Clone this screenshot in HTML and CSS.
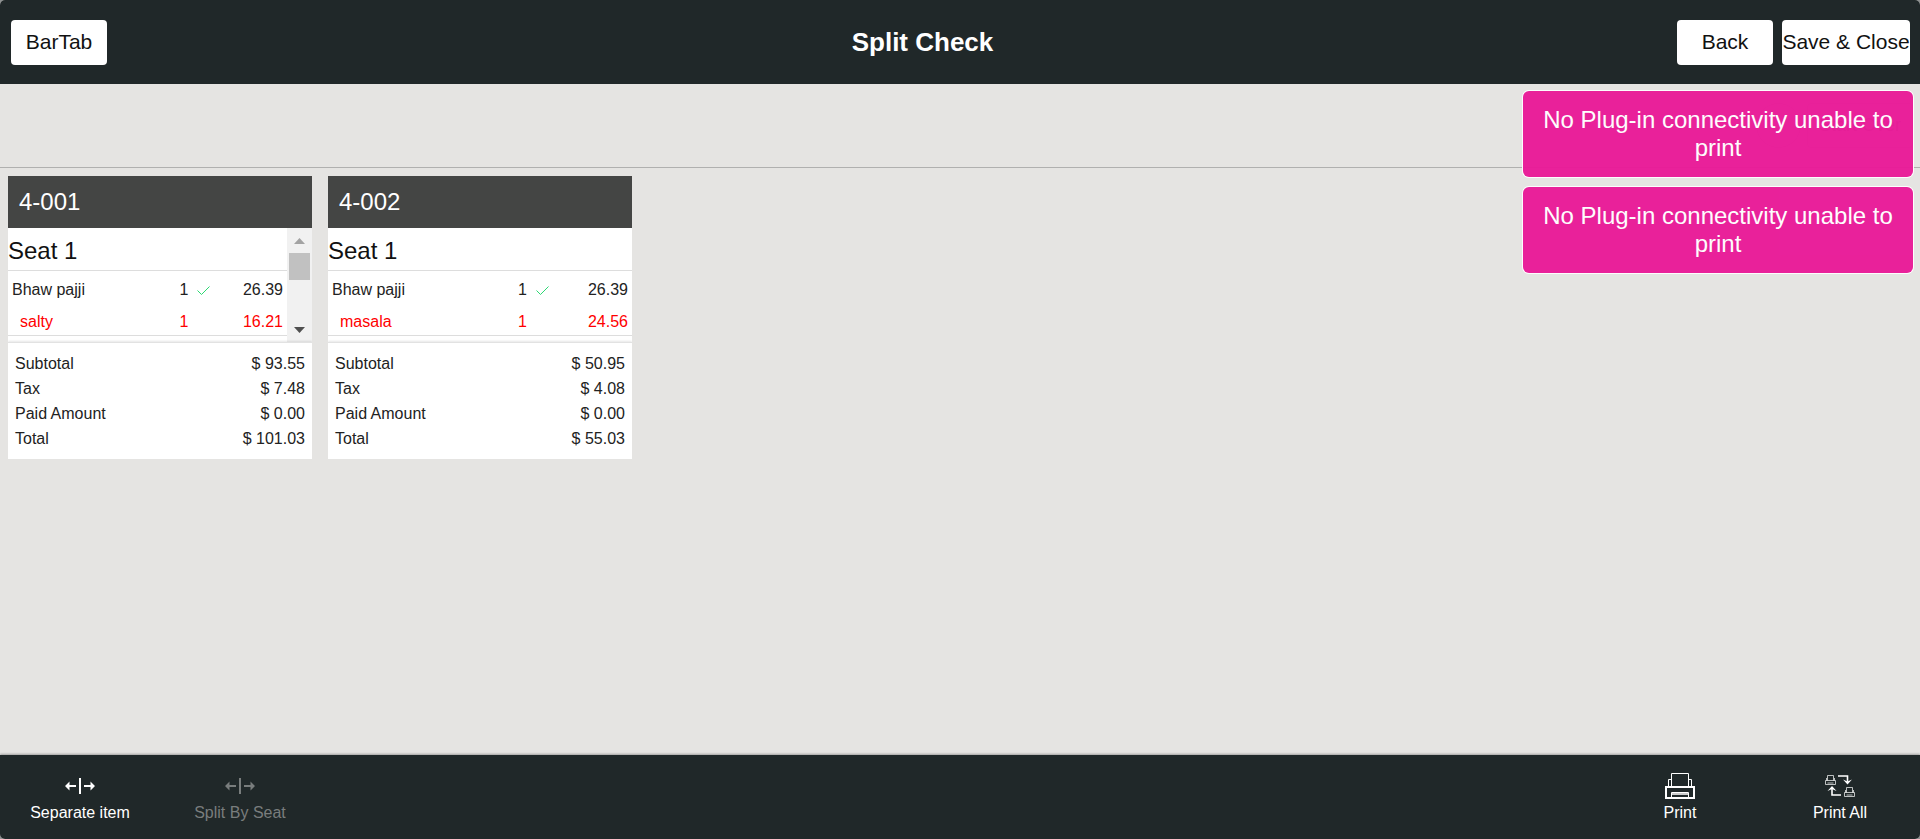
FILE: index.html
```html
<!DOCTYPE html>
<html lang="en">
<head>
<meta charset="utf-8">
<title>Split Check</title>
<link rel="stylesheet" href="styles.css">
</head>
<body>
<div class="app">
  <header class="topbar">
    <div class="topbar-left"><button class="btn" type="button">BarTab</button></div>
    <h1 class="title">Split Check</h1>
    <div class="topbar-right">
      <button class="btn" type="button">Back</button>
      <button class="btn btn-wide" type="button">Save &amp; Close</button>
    </div>
  </header>

  <div class="toolbar">
    <button class="round" type="button" aria-label="Add"></button>
    <button class="start-over" type="button">Start Over</button>
  </div>

  <main class="checks">
    <section class="card">
      <h2 class="card-title">4-001</h2>
      <div class="card-body">
        <div class="items">
          <h3 class="seat">Seat 1</h3>
          <table class="lines">
            <tr><td class="name">Bhaw pajji</td><td class="qty">1</td><td class="tick"><svg width="13" height="12" viewBox="0 0 13 12"><path d="M0.500 6.500 L4.500 10.500 L12.500 2.500"/></svg></td><td class="price">26.39</td></tr>
            <tr class="mod"><td class="name">salty</td><td class="qty">1</td><td class="tick"></td><td class="price">16.21</td></tr>
          </table>
        </div>
        <div class="scroll" aria-hidden="true">
          <svg class="up" width="11" height="6" viewBox="0 0 11 6"><path d="M5.500 0 L11 6 H0Z"/></svg>
          <div class="thumb"></div>
          <svg class="down" width="11" height="6" viewBox="0 0 11 6"><path d="M0 0 H11 L5.500 6Z"/></svg>
        </div>
      </div>
      <dl class="totals">
        <div><dt>Subtotal</dt><dd>$ 93.55</dd></div>
        <div><dt>Tax</dt><dd>$ 7.48</dd></div>
        <div><dt>Paid Amount</dt><dd>$ 0.00</dd></div>
        <div><dt>Total</dt><dd>$ 101.03</dd></div>
      </dl>
    </section>

    <section class="card">
      <h2 class="card-title">4-002</h2>
      <div class="card-body">
        <div class="items">
          <h3 class="seat">Seat 1</h3>
          <table class="lines">
            <tr><td class="name">Bhaw pajji</td><td class="qty">1</td><td class="tick"><svg width="13" height="12" viewBox="0 0 13 12"><path d="M0.500 6.500 L4.500 10.500 L12.500 2.500"/></svg></td><td class="price">26.39</td></tr>
            <tr class="mod"><td class="name">masala</td><td class="qty">1</td><td class="tick"></td><td class="price">24.56</td></tr>
          </table>
        </div>
      </div>
      <dl class="totals">
        <div><dt>Subtotal</dt><dd>$ 50.95</dd></div>
        <div><dt>Tax</dt><dd>$ 4.08</dd></div>
        <div><dt>Paid Amount</dt><dd>$ 0.00</dd></div>
        <div><dt>Total</dt><dd>$ 55.03</dd></div>
      </dl>
    </section>
  </main>

  <footer class="bottombar">
    <button class="action" type="button">
      <svg class="icon" width="32" height="30" viewBox="0 0 32 30"><g fill="currentColor"><path d="M15 7h2v16h-2zM5 14h7v2H5zM20 14h7v2h-7z"/><path d="M1 15l4.500-4.500V19.500zM31 15l-4.500-4.500V19.500z"/></g></svg>
      <span>Separate item</span>
    </button>
    <button class="action" type="button" disabled>
      <svg class="icon" width="32" height="30" viewBox="0 0 32 30"><g fill="currentColor"><path d="M15 7h2v16h-2zM5 14h7v2H5zM20 14h7v2h-7z"/><path d="M1 15l4.500-4.500V19.500zM31 15l-4.500-4.500V19.500z"/></g></svg>
      <span>Split By Seat</span>
    </button>
    <span class="spacer"></span>
    <button class="action" type="button">
      <svg class="icon" width="32" height="30" viewBox="0 0 32 30"><g fill="none" stroke="currentColor"><path stroke-width="2" d="M2 16h28v11H2z"/><path stroke-width="1" d="M7.500 15V2.500h17V15M7.500 8.500H4.500V15M24.500 8.500h3V15"/><path stroke-width="1" d="M7.500 26v-4.500h17V26"/></g><path fill="#ccc" d="M8 22h16v2H8z"/></svg>
      <span>Print</span>
    </button>
    <button class="action" type="button">
      <svg class="icon" width="32" height="30" viewBox="0 0 32 30"><g fill="none" stroke="currentColor"><g id="mini" stroke-width="1" opacity=".7"><path d="M1.500 9.500h10v4h-10zM3.500 9.500V4.500h6v5M2.500 9.500V7M10.500 9.500V7M3.500 12h6"/></g><use href="#mini" x="19" y="12"/><path stroke-width="1.600" d="M14 5h9.500v6M8 17v7h9"/></g><path fill="currentColor" d="M19 8.500l4.500 2 4.500-2-4.500 5zM3.500 20L8 15l4.500 5L8 18z"/></svg>
      <span>Print All</span>
    </button>
  </footer>

  <div class="toasts" role="status">
    <div class="toast">No Plug-in connectivity unable to print</div>
    <div class="toast">No Plug-in connectivity unable to print</div>
  </div>
</div>
</body>
</html>
```
FILE: styles.css
```css
* { box-sizing: border-box; }
body { margin: 0; background: #8f9292; font-family: "Liberation Sans", Arial, sans-serif; font-size: 16px; color: #222; }
h1, h2, h3, dl, dd { margin: 0; font-weight: 400; }
button { font: inherit; border: 0; padding: 0; }

.app { position: relative; display: flex; flex-direction: column; min-height: 100vh; overflow: hidden; border-radius: 5px; background: #e5e4e2; }

.topbar { display: grid; grid-template-columns: 168px 1fr 243px; align-items: center; height: 84px; background: #202829; }
.topbar-left { padding-left: 11px; }
.topbar-right { display: flex; gap: 9px; }
.title { text-align: center; font-size: 26px; font-weight: 700; color: #fff; }
.btn { width: 96px; height: 45px; border-radius: 4px; background: #fff; color: #111; font-size: 21px; white-space: nowrap; }
.btn-wide { width: 128px; }

.toolbar { display: flex; justify-content: flex-end; align-items: center; gap: 6px; height: 84px; padding-right: 7px; border-bottom: 1px solid #b0b0af; }
.round { width: 45px; height: 45px; border: 1px solid #bbb; border-radius: 50%; background: #e5e4e2; }
.start-over { width: 106px; height: 45px; border: 1px solid #bbb; border-radius: 4px; background: #e5e4e2; color: #777; font-size: 18px; }

.checks { flex: 1; display: flex; align-items: flex-start; gap: 16px; padding: 8px; }
.card { width: 304px; overflow: hidden; background: #fff; }
.card-title { padding: 0 11px; line-height: 52px; font-size: 24px; color: #fff; background: #444544; }
.card-body { display: flex; height: 114px; }
.items { flex: 1; overflow: hidden; }
.seat { line-height: 42px; padding-top: 2px; height: 43px; font-size: 24px; color: #111; border-bottom: 1px solid #ddd; }
.lines { width: 100%; table-layout: fixed; border-spacing: 0; border-bottom: 1px solid #ddd; }
.lines td { height: 32px; padding: 5px 0 0; }
.lines .name { padding-left: 4px; }
.lines .mod { color: #f00; }
.lines .mod .name { padding-left: 12px; }
.qty { width: 9px; text-align: right; }
.tick { width: 26px; }
.lines .tick { padding-left: 9px; }
.tick svg { display: block; fill: none; stroke: #2bd872; stroke-width: 1; }
.price { width: 26%; text-align: right; }
.lines .price { padding-right: 4px; }

.scroll { display: flex; flex-direction: column; align-items: center; width: 25px; padding: 10px 0 9px; background: #f1f1f1; }
.scroll svg { display: block; }
.up { fill: #a3a3a3; }
.down { margin-top: auto; fill: #505050; }
.thumb { width: 21px; height: 27px; margin-top: 9px; background: #c1c1c1; }

.totals { position: relative; padding: 8px 7px; border-top: 1px solid #e2e2e2; box-shadow: 0 -1px 2px rgba(0,0,0,.1); }
.totals div { display: flex; justify-content: space-between; line-height: 25px; }

.bottombar { position: relative; display: flex; height: 84px; background: #202829; box-shadow: 0 -1px 2px rgba(0,0,0,.3); }
.action { display: flex; flex-direction: column; align-items: center; width: 160px; padding-top: 16px; background: none; color: #fff; }
.action:disabled { color: #797d7d; }
.action span { line-height: 24px; }
.icon { display: block; height: 30px; }
.spacer { flex: 1; }

.toasts { position: absolute; top: 91px; right: 7px; width: 390px; display: flex; flex-direction: column; gap: 10px; }
.toast { padding: 15px 18px; border-radius: 6px; background: #ea1a98; box-shadow: 0 0 0 1px #fff; color: #fff; font-size: 24px; line-height: 28px; text-align: center; opacity: .96; }
```
